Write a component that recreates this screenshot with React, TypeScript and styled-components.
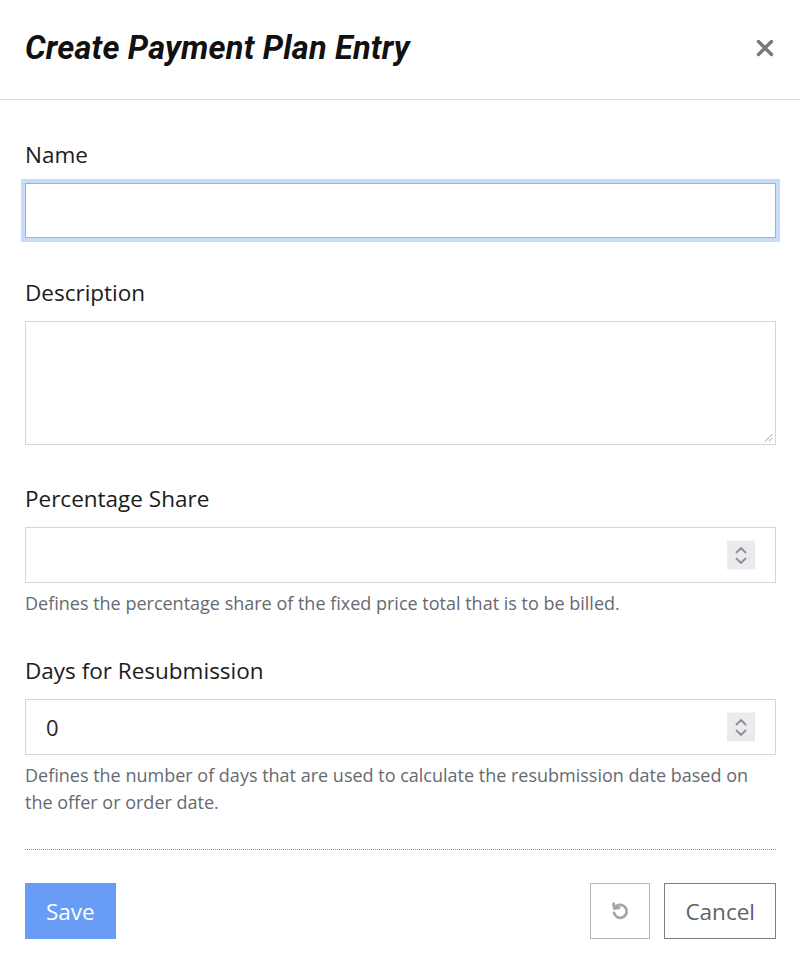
import React from 'react';
import styled, { createGlobalStyle } from 'styled-components';

const GlobalStyle = createGlobalStyle`
  html, body {
    margin: 0;
    padding: 0;
    background: #fff;
  }
  body {
    font-family: 'Open Sans', 'Liberation Sans', sans-serif;
    color: #1f1f1f;
  }
  * {
    box-sizing: border-box;
  }
`;

const Dialog = styled.div`
  width: 800px;
  min-height: 964px;
  background: #fff;
`;

const Header = styled.div`
  display: flex;
  align-items: center;
  justify-content: space-between;
  height: 100px;
  padding: 0 25px 4px 25px;
  border-bottom: 1px solid #dcdcdc;
`;

const Title = styled.h1`
  margin: 0;
  font-family: Roboto, 'Liberation Sans', sans-serif;
  font-style: italic;
  font-weight: 700;
  font-size: 32.5px;
  letter-spacing: 0.2px;
  color: #111;
`;

const CloseButton = styled.button`
  border: none;
  background: none;
  padding: 0;
  width: 20px;
  height: 20px;
  display: flex;
  align-items: center;
  justify-content: center;
  cursor: pointer;
`;

const Body = styled.div`
  padding: 41px 24px 0 25px;
`;

const Field = styled.div<{ $gap?: number }>`
  display: flex;
  flex-direction: column;
  margin-bottom: ${(p) => p.$gap ?? 42}px;
`;

const Label = styled.label`
  font-size: 22.5px;
  line-height: 28px;
  color: #1c1c1c;
  margin-bottom: 14px;
`;

const InputBox = styled.div<{ $focused?: boolean }>`
  position: relative;
  height: ${(p) => (p.$focused ? 55 : 56)}px;
  border: 1px solid ${(p) => (p.$focused ? '#8fb3ef' : '#d3d6db')};
  box-shadow: ${(p) => (p.$focused ? '0 0 0 4px #c8dbfa' : 'none')};
  background: #fff;
  display: flex;
  align-items: center;
  padding: 0 20px;
  font-size: 22px;
  color: #2a2a2a;
`;

const TextArea = styled.div`
  position: relative;
  height: 124px;
  border: 1px solid #d3d6db;
  background: #fff;
`;

const ResizeGrip = styled.svg`
  position: absolute;
  right: 2px;
  bottom: 2px;
`;

const Spinner = styled.div`
  position: absolute;
  right: 20px;
  top: 50%;
  transform: translateY(-50%);
  width: 28px;
  height: 29px;
  background: #ebebef;
  display: flex;
  align-items: center;
  justify-content: center;
`;

const Help = styled.div`
  margin-top: 7px;
  font-size: 18px;
  line-height: 27px;
  color: #666a70;
`;

const Separator = styled.div`
  border-top: 1px dotted #8a8a8a;
  margin-top: 33px;
`;

const Footer = styled.div`
  display: flex;
  align-items: center;
  justify-content: space-between;
  margin-top: 33px;
`;

const Group = styled.div`
  display: flex;
  gap: 14px;
`;

const PrimaryButton = styled.button`
  height: 56px;
  padding: 0 21px;
  border: none;
  background: #699cf7;
  color: #fff;
  font-family: 'Open Sans', 'Liberation Sans', sans-serif;
  font-size: 22.5px;
`;

const OutlineButton = styled.button<{ $muted?: boolean }>`
  height: 56px;
  min-width: ${(p) => (p.$muted ? 60 : 0)}px;
  padding: 0 ${(p) => (p.$muted ? 0 : 20)}px;
  background: #fff;
  border: 1px solid ${(p) => (p.$muted ? '#b3b6ba' : '#7b7f85')};
  color: #5d636b;
  font-family: 'Open Sans', 'Liberation Sans', sans-serif;
  font-size: 22.5px;
  display: flex;
  align-items: center;
  justify-content: center;
`;

const SpinArrows = () => (
  <svg width="14" height="22" viewBox="0 0 14 22" fill="none" stroke="#8b8f96" strokeWidth="1.8" strokeLinecap="round" strokeLinejoin="round">
    <path d="M2.5 8 L7 3.5 L11.5 8" />
    <path d="M2.5 14 L7 18.5 L11.5 14" />
  </svg>
);

const NumberInput: React.FC<{ value?: string }> = ({ value }) => (
  <InputBox>
    {value}
    <Spinner>
      <SpinArrows />
    </Spinner>
  </InputBox>
);

export default function App() {
  return (
    <Dialog>
      <GlobalStyle />
      <Header>
        <Title>Create Payment Plan Entry</Title>
        <CloseButton aria-label="Close">
          <svg width="18" height="18" viewBox="0 0 18 18" stroke="#7a7a7a" strokeWidth="3.4" strokeLinecap="round">
            <path d="M2.5 2.5 L15.5 15.5 M15.5 2.5 L2.5 15.5" />
          </svg>
        </CloseButton>
      </Header>
      <Body>
        <Field $gap={41}>
          <Label>Name</Label>
          <InputBox $focused />
        </Field>
        <Field $gap={40}>
          <Label>Description</Label>
          <TextArea>
            <ResizeGrip width="9" height="9" viewBox="0 0 9 9" stroke="#9a9a9a" strokeWidth="1">
              <path d="M8.5 1 L1 8.5 M8.5 5 L5 8.5" />
            </ResizeGrip>
          </TextArea>
        </Field>
        <Field $gap={40}>
          <Label>Percentage Share</Label>
          <NumberInput />
          <Help>Defines the percentage share of the fixed price total that is to be billed.</Help>
        </Field>
        <Field $gap={0}>
          <Label>Days for Resubmission</Label>
          <NumberInput value="0" />
          <Help>
            Defines the number of days that are used to calculate the resubmission date based on the offer or order date.
          </Help>
        </Field>
        <Separator />
        <Footer>
          <PrimaryButton>Save</PrimaryButton>
          <Group>
            <OutlineButton $muted aria-label="Reset">
              <svg width="22" height="22" viewBox="0 0 24 24" fill="none" stroke="#a3a6aa" strokeWidth="3" strokeLinecap="round" strokeLinejoin="round">
                <path d="M6.5 8.5 A7 7 0 1 1 5.5 14" />
                <path d="M5 4 L5.8 9.2 L11 8.6" />
              </svg>
            </OutlineButton>
            <OutlineButton>Cancel</OutlineButton>
          </Group>
        </Footer>
      </Body>
    </Dialog>
  );
}
